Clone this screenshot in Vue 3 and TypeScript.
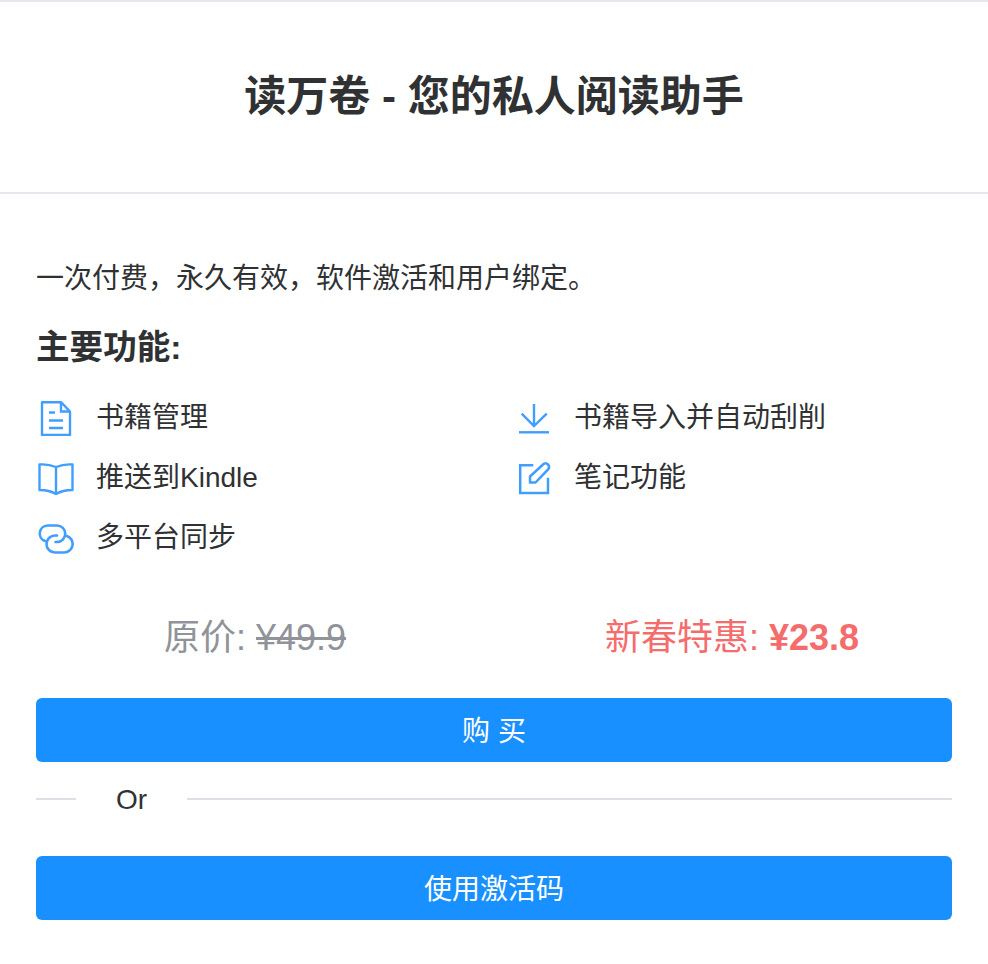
<script setup lang="ts">
const features = [
  { key: 'doc', label: '书籍管理' },
  { key: 'download', label: '书籍导入并自动刮削' },
  { key: 'book', label: '推送到Kindle' },
  { key: 'edit', label: '笔记功能' },
  { key: 'sync', label: '多平台同步' },
]
</script>

<template>
  <div class="page" lang="zh-CN">
    <header class="header">
      <h1>读万卷 - 您的私人阅读助手</h1>
    </header>
    <main class="body">
      <p class="intro">一次付费，永久有效，软件激活和用户绑定。</p>
      <h2>主要功能:</h2>
      <ul class="features">
        <li v-for="f in features" :key="f.key">
          <span class="icon">
            <svg v-if="f.key === 'doc'" viewBox="0 0 36 36" width="36" height="36" fill="none" stroke="#409eff" stroke-width="2.400">
              <path d="M4 2.200H23L32 11.500V35H4Z" stroke-linejoin="round" />
              <path d="M23 2.200V11.500H32" />
              <path d="M11 12.500H17M11 20.500H25M11 28H25" />
            </svg>
            <svg v-else-if="f.key === 'download'" viewBox="0 0 36 36" width="36" height="36" fill="none" stroke="#409eff" stroke-width="2.400">
              <path d="M18 4V26M5.700 13.700L18 26L30.700 13.700" />
              <path d="M3 32.300H33" />
            </svg>
            <svg v-else-if="f.key === 'book'" viewBox="0 0 36 36" width="36" height="36" fill="none" stroke="#409eff" stroke-width="2.400" stroke-linejoin="round">
              <path d="M18 7C13 5 7 4 1.500 4.500V30C7 30 13 31 18 34C23 31 29 30 34.500 30V4.500C29 4 23 5 18 7Z" />
              <path d="M18 7V34" />
            </svg>
            <svg v-else-if="f.key === 'edit'" viewBox="0 0 36 36" width="36" height="36" fill="none" stroke="#409eff" stroke-width="2.500">
              <path d="M17.300 5.200H4.200V33H32V17.700" />
              <path d="M14 16.500L27 4.500C28.500 3 30.500 3 32 4.500C33.500 6 33.500 8 32 9.500L19.500 22.500H14Z" stroke-linejoin="round" />
            </svg>
            <svg v-else viewBox="0 0 36 36" width="36" height="36" fill="none" stroke="#409eff" stroke-width="2.600" stroke-linecap="round">
              <path d="M7 21A8 8 0 0 1 9.500 5.500H19A8.250 8.250 0 0 1 19 22H17.500" />
              <path d="M29 16A8.500 8.500 0 0 1 26 32.500H17A8.500 8.500 0 0 1 17 15.500H19" />
            </svg>
          </span>
          <span class="label">{{ f.label }}</span>
        </li>
      </ul>
      <div class="prices">
        <div class="price old">原价: <s>¥49.9</s></div>
        <div class="price sale">新春特惠: <strong>¥23.8</strong></div>
      </div>
      <button class="btn" type="button">购 买</button>
      <div class="divider">
        <span class="line short"></span>
        <span class="or">Or</span>
        <span class="line long"></span>
      </div>
      <button class="btn" type="button">使用激活码</button>
    </main>
  </div>
</template>

<style>
html, body { margin: 0; background: #fff; }
</style>

<style scoped>
.page {
  width: 988px;
  height: 964px;
  overflow: hidden;
  background: #fff;
  color: #303133;
  font-family: "Liberation Sans", "Noto Sans CJK SC", sans-serif;
  box-sizing: border-box;
  border-top: 2px solid #e4e7ed;
}
.header {
  height: 190px;
  display: flex;
  align-items: center;
  justify-content: center;
  border-bottom: 2px solid #e4e7ed;
}
h1 {
  margin: 0;
  font-size: 42px;
  font-weight: 700;
  line-height: 1.2;
}
.body {
  padding: 60px 36px 0;
}
.intro {
  margin: 0;
  font-size: 28px;
  line-height: 50px;
}
h2 {
  margin: 20px 0 0;
  font-size: 33.6px;
  font-weight: 700;
  line-height: 48px;
}
.features {
  list-style: none;
  margin: 16px 0 0;
  padding: 0;
  display: grid;
  grid-template-columns: 438px 438px;
  column-gap: 40px;
}
.features li {
  display: flex;
  align-items: center;
  height: 60px;
}
.icon {
  width: 40px;
  height: 36px;
  display: flex;
  justify-content: center;
  margin-right: 20px;
}
.label {
  font-size: 28px;
  line-height: 60px;
}
.prices {
  display: grid;
  grid-template-columns: 438px 438px;
  column-gap: 39px;
  margin-top: 34px;
}
.price {
  text-align: center;
  font-size: 36px;
  line-height: 72px;
}
.old { color: #909399; }
.sale { color: #f56c6c; }
.btn {
  display: block;
  width: 916px;
  height: 64px;
  border: 0;
  border-radius: 6px;
  background: #1890ff;
  color: #fff;
  font-family: inherit;
  font-size: 28px;
  padding: 0 0 2px;
}
.prices + .btn { margin-top: 24px; }
.divider {
  display: flex;
  align-items: center;
  height: 74px;
  margin-bottom: 20px;
}
.line {
  height: 2px;
  background: #dcdfe6;
}
.short { width: 40px; }
.long { flex: 1; }
.or {
  margin: 0 40px;
  padding-top: 2px;
  font-size: 28px;
}
</style>
